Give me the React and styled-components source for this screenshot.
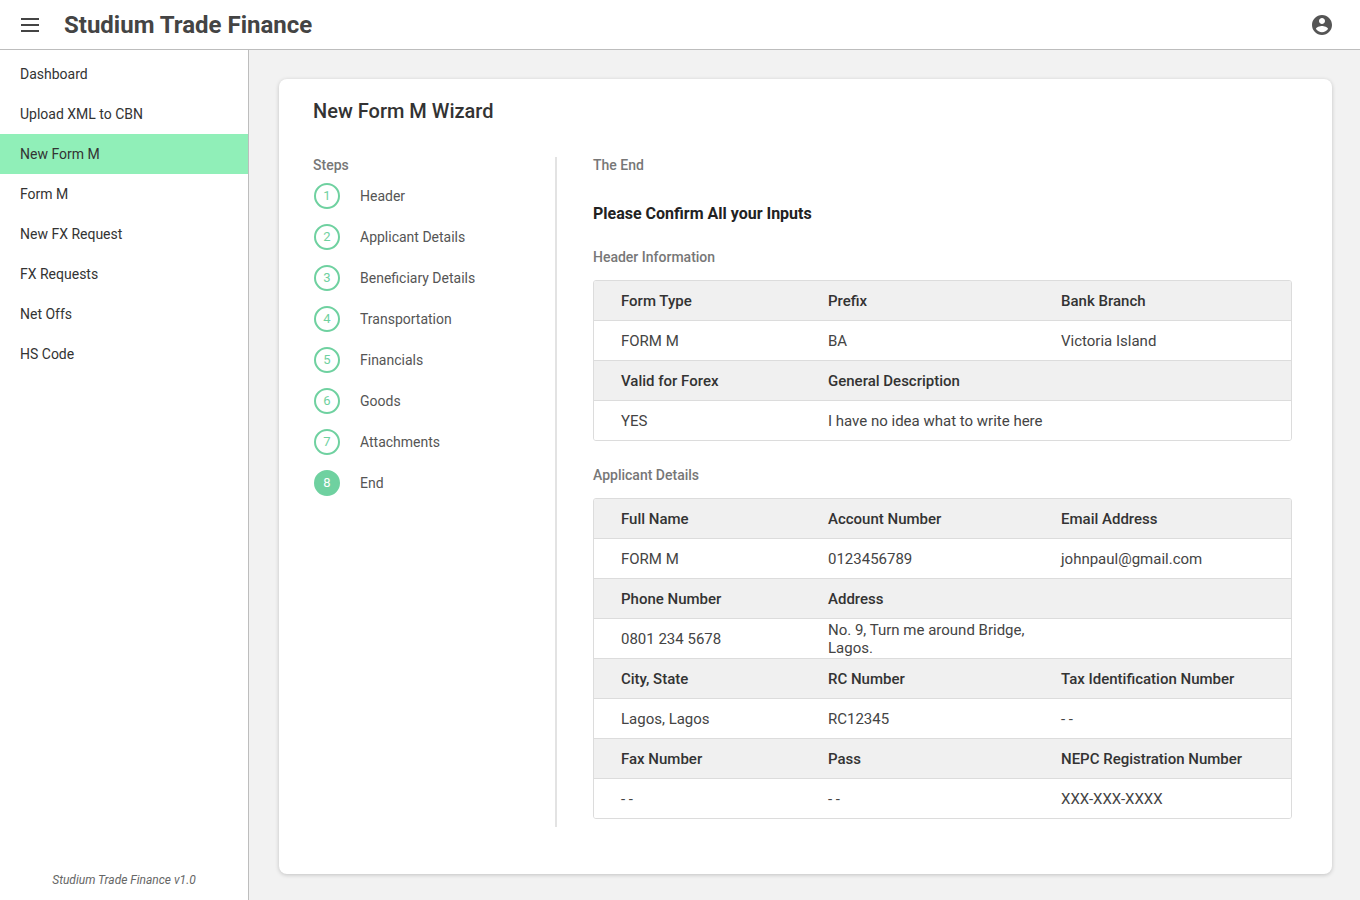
import React from "react";
import styled, { createGlobalStyle } from "styled-components";

const G = createGlobalStyle`
  html,body{margin:0;padding:0;height:100%;}
  body{font-family:Roboto,"Liberation Sans",sans-serif;color:#333;background:#f2f2f2;}
  #root{height:100%;}
`;
const Page = styled.div`height:900px;display:flex;flex-direction:column;`;
const Top = styled.header`height:50px;flex:none;background:#fff;border-bottom:1px solid #bdbdbd;display:flex;align-items:center;padding:0 26px 0 18px;box-sizing:border-box;`;
const Title = styled.h1`margin:0 0 0 22px;font-size:24px;font-weight:700;color:#444;flex:1;`;
const Body = styled.div`flex:1;display:flex;min-height:0;`;
const Side = styled.nav`width:248px;flex:none;background:#fff;border-right:1px solid #bdbdbd;display:flex;flex-direction:column;padding-top:4px;`;
const NavItem = styled.div`height:40px;display:flex;align-items:center;padding-left:20px;font-size:14px;color:#333;background:${p=>p.active?"#90efb8":"transparent"};`;
const Foot = styled.div`margin-top:auto;text-align:center;font-size:12px;font-style:italic;color:#666;padding-bottom:13px;`;
const Main = styled.main`flex:1;padding:29px 28px 26px 30px;display:flex;`;
const Card = styled.section`flex:1;background:#fff;border-radius:8px;box-shadow:0 1px 4px rgba(0,0,0,.2);padding:20px 40px 0 34px;`;
const CardTitle = styled.h2`margin:0;font-size:20px;font-weight:500;color:#333;`;
const Wiz = styled.div`display:flex;margin-top:34px;`;
const Steps = styled.div`width:242px;border-right:2px solid #e3e3e3;height:670px;`;
const Small = styled.div`font-size:14px;font-weight:500;color:#777;`;
const StepRow = styled.div`display:flex;align-items:center;height:41px;font-size:14px;color:#555;`;
const Circle = styled.div`width:26px;height:26px;border-radius:50%;border:2px solid #6fd1a0;box-sizing:border-box;display:flex;align-items:center;justify-content:center;font-size:13px;color:${p=>p.active?"#fff":"#6fd1a0"};background:${p=>p.active?"#6fd1a0":"transparent"};margin:0 20px 0 1px;`;
const Content = styled.div`flex:1;padding-left:36px;`;
const Confirm = styled.div`font-size:16px;font-weight:700;color:#222;margin:31px 0 26px;`;
const Table = styled.div`border:1px solid #dcdcdc;border-radius:3px;margin:15px 0 26px;overflow:hidden;`;
const Row = styled.div`display:grid;grid-template-columns:207px 233px 1fr;height:39px;align-items:center;padding-left:27px;font-size:15px;background:${p=>p.head?"#f0f0f0":"#fff"};font-weight:${p=>p.head?500:400};color:${p=>p.head?"#333":"#444"};& + &{border-top:1px solid #dcdcdc;}`;

const nav=["Dashboard","Upload XML to CBN","New Form M","Form M","New FX Request","FX Requests","Net Offs","HS Code"];
const steps=["Header","Applicant Details","Beneficiary Details","Transportation","Financials","Goods","Attachments","End"];
const T=({rows})=>(<Table>{rows.map((r,i)=>(<Row key={i} head={i%2===0}>{r.map((c,j)=><span key={j}>{c}</span>)}</Row>))}</Table>);

export default function App(){
  return(<Page><G/>
    <Top>
      <svg width="24" height="24" viewBox="0 0 24 24"><path d="M3 6h18M3 12h18M3 18h18" stroke="#444" strokeWidth="2"/></svg>
      <Title>Studium Trade Finance</Title>
      <svg width="24" height="24" viewBox="0 0 24 24"><path fill="#555" d="M12 2C6.48 2 2 6.48 2 12s4.48 10 10 10 10-4.48 10-10S17.52 2 12 2zm0 3c1.66 0 3 1.34 3 3s-1.34 3-3 3-3-1.34-3-3 1.34-3 3-3zm0 14.2c-2.5 0-4.71-1.28-6-3.22.03-1.99 4-3.08 6-3.08 1.99 0 5.97 1.09 6 3.08-1.29 1.94-3.5 3.22-6 3.22z"/></svg>
    </Top>
    <Body>
      <Side>{nav.map(n=><NavItem key={n} active={n==="New Form M"}>{n}</NavItem>)}<Foot>Studium Trade Finance v1.0</Foot></Side>
      <Main><Card>
        <CardTitle>New Form M Wizard</CardTitle>
        <Wiz>
          <Steps><Small style={{marginBottom:2}}>Steps</Small>
            {steps.map((s,i)=><StepRow key={s}><Circle active={i===7}>{i+1}</Circle>{s}</StepRow>)}
          </Steps>
          <Content>
            <Small>The End</Small>
            <Confirm>Please Confirm All your Inputs</Confirm>
            <Small>Header Information</Small>
            <T rows={[["Form Type","Prefix","Bank Branch"],["FORM M","BA","Victoria Island"],["Valid for Forex","General Description",""],["YES","I have no idea what to write here",""]]}/>
            <Small>Applicant Details</Small>
            <T rows={[["Full Name","Account Number","Email Address"],["FORM M","0123456789","johnpaul@gmail.com"],["Phone Number","Address",""],["0801 234 5678","No. 9, Turn me around Bridge, Lagos.",""],["City, State","RC Number","Tax Identification Number"],["Lagos, Lagos","RC12345","- -"],["Fax Number","Pass","NEPC Registration Number"],["- -","- -","XXX-XXX-XXXX"]]}/>
          </Content>
        </Wiz>
      </Card></Main>
    </Body>
  </Page>);
}
